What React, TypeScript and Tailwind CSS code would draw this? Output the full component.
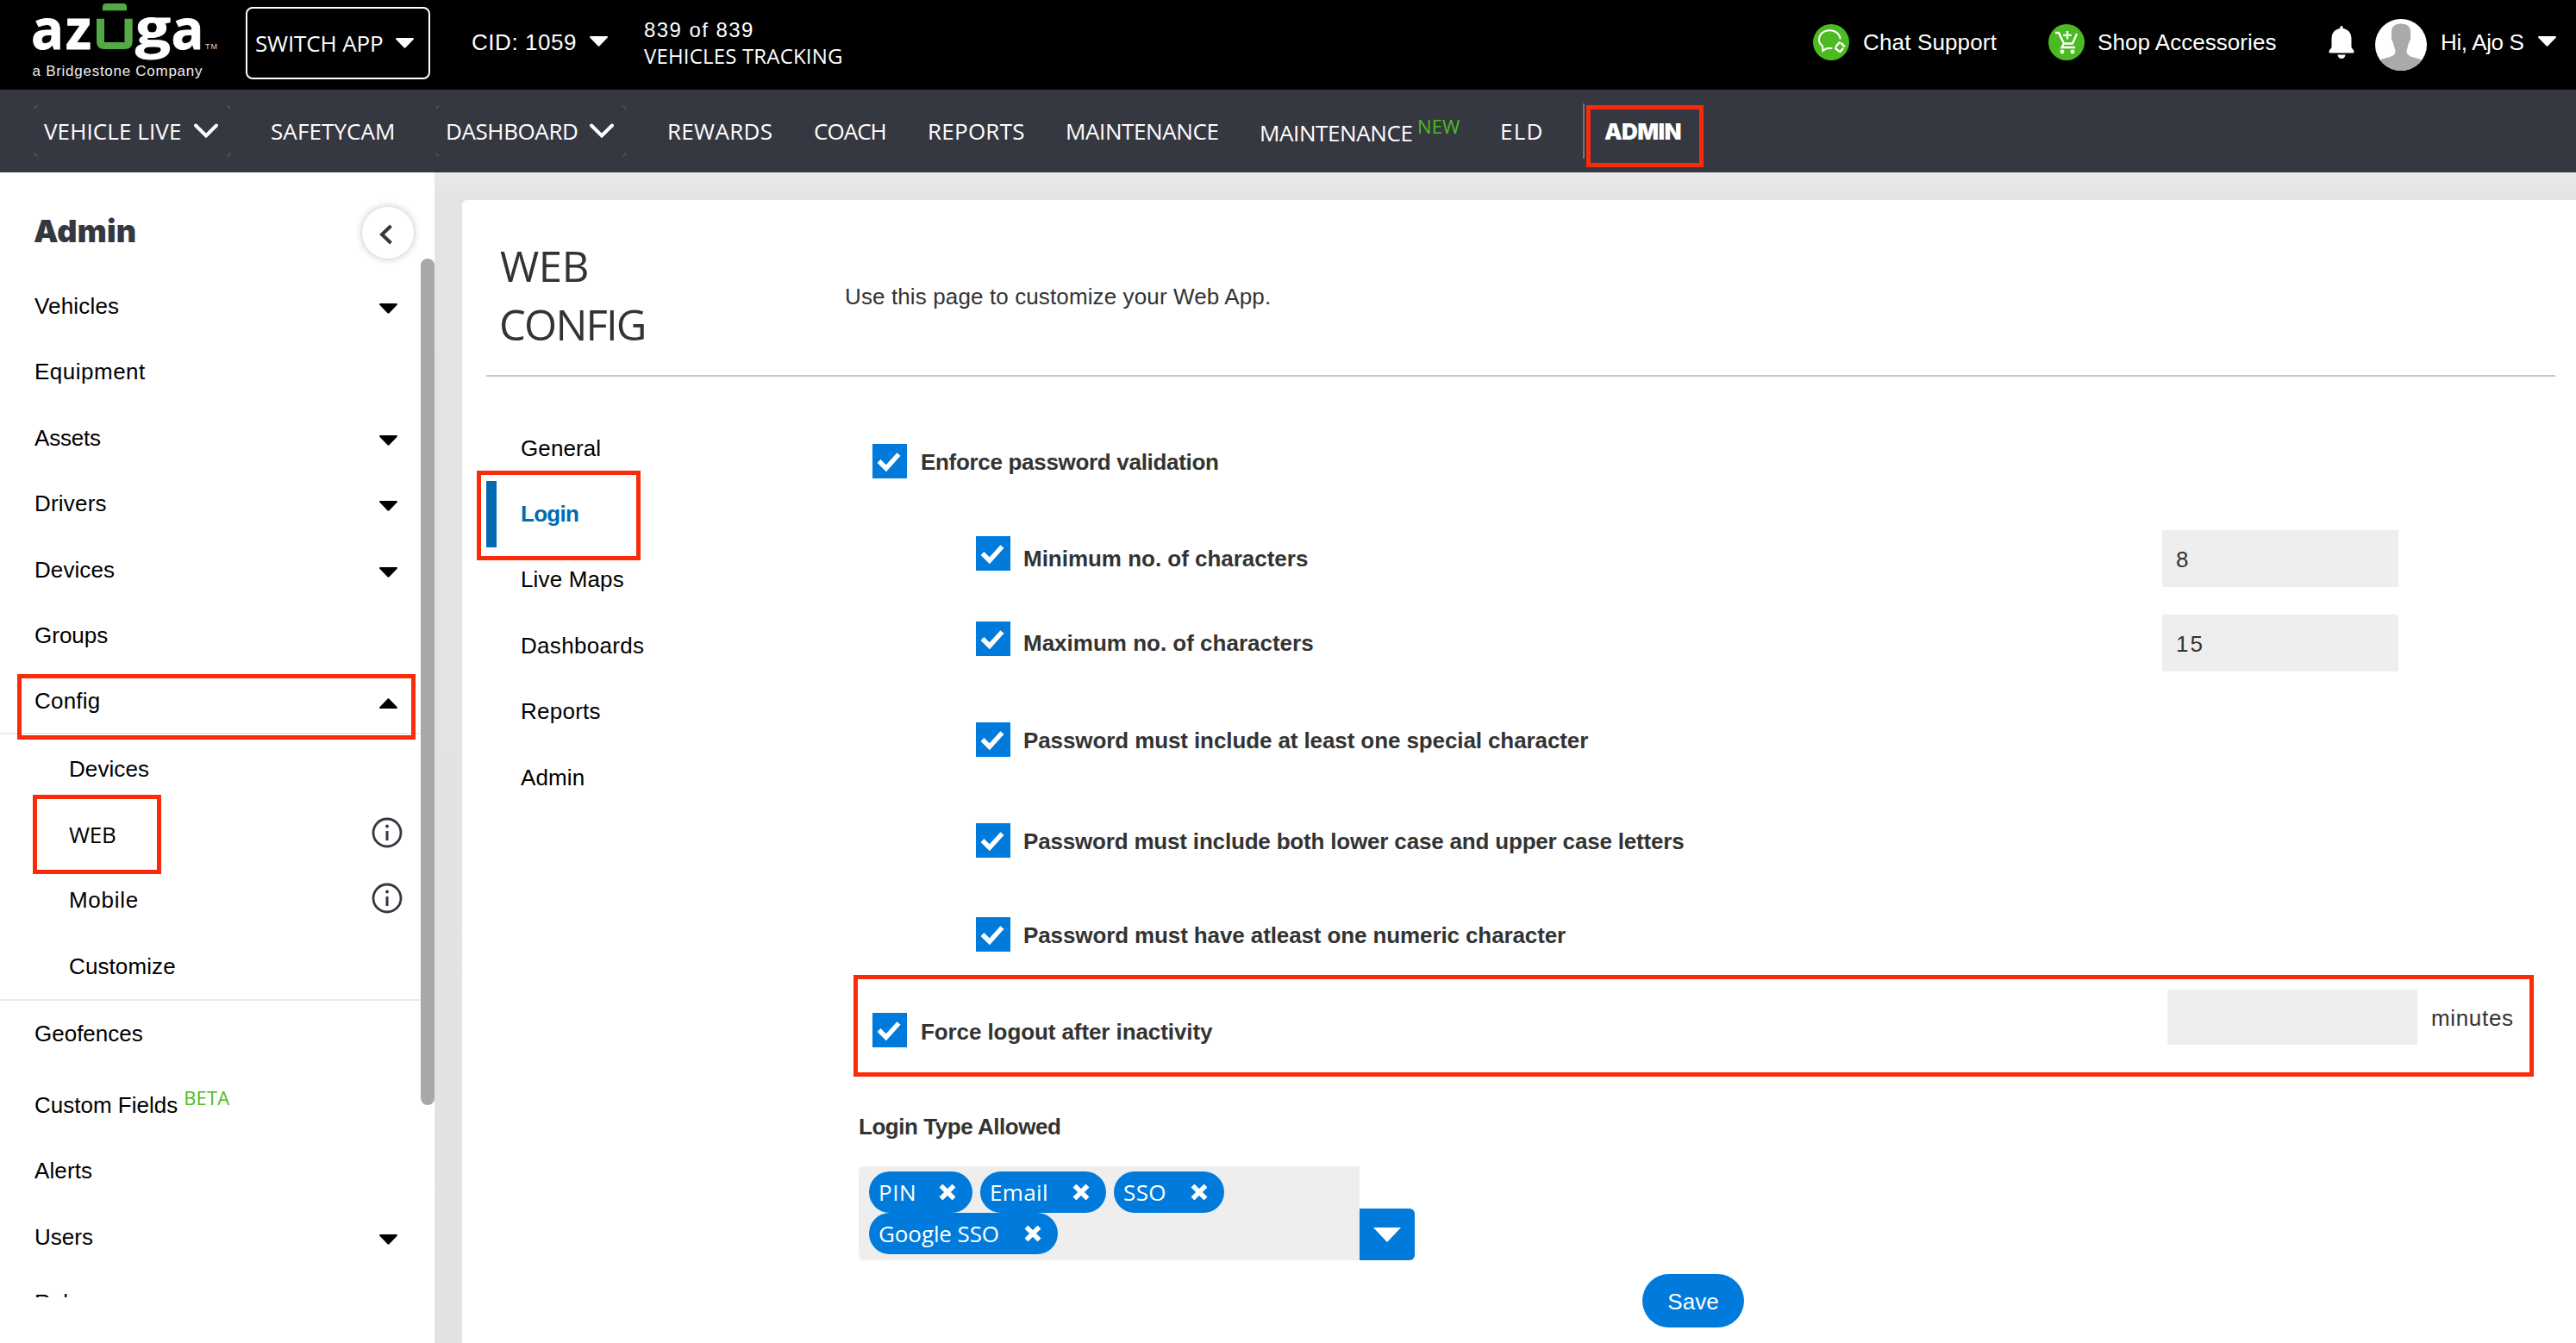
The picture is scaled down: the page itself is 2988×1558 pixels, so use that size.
import React from "react";

const sans = "font-['Liberation_Sans',Arial,sans-serif]";
const caps = "font-['Open_Sans',sans-serif]";

function Caret({ up = false, className = "" }: { up?: boolean; className?: string }) {
  return (
    <svg viewBox="0 0 21 12" fill="currentColor" className={`h-3 w-[21px] shrink-0 ${up ? "rotate-180" : ""} ${className}`}>
      <path d="M1.2 0h18.6c1.1 0 1.5 1.1.8 1.8l-9.1 9.4c-.6.6-1.4.6-2 0L.4 1.8C-.3 1.1.1 0 1.2 0z" />
    </svg>
  );
}

function Chevron() {
  return (
    <svg viewBox="0 0 28 18" fill="none" stroke="currentColor" strokeWidth="4" className="h-[18px] w-7 shrink-0">
      <path d="M2 2.5l12 12 12-12" strokeLinecap="round" />
    </svg>
  );
}

function Logo() {
  return (
    <svg viewBox="0 0 220 92" className="ml-9 h-[92px] w-[220px] shrink-0 self-start overflow-visible">
      <g fill="#fff" stroke="#fff" strokeWidth="0.8" fontFamily="'Open Sans', sans-serif" fontWeight="700" fontSize="65">
        <text x="0" y="56.5" textLength="38" lengthAdjust="spacingAndGlyphs">a</text>
        <text x="40" y="56.5" textLength="30" lengthAdjust="spacingAndGlyphs">z</text>
        <text x="121" y="53.5" fontSize="60" textLength="41" lengthAdjust="spacingAndGlyphs">g</text>
        <text x="162.500" y="56.5" textLength="38" lengthAdjust="spacingAndGlyphs">a</text>
      </g>
      <path d="M83 12.300V8q0-4 4-4h20q4 0 4 4v4.300z" fill="#54a946" />
      <path d="M76 21.700h9V49h23.500V21.700h9.200V48q0 9-9 9H85q-9 0-9-9z" fill="#54a946" />
      <text x="202" y="57" fill="#ddd" fontFamily="'Liberation Sans', sans-serif" fontSize="9" textLength="14">TM</text>
      <text x="1.500" y="88" fill="#eee" fontFamily="'Liberation Sans', sans-serif" fontSize="17" textLength="197">a Bridgestone Company</text>
    </svg>
  );
}

function ChatIcon() {
  return (
    <svg viewBox="0 0 42 42" className="size-[42px] shrink-0">
      <circle cx="21" cy="21" r="21" fill="#4cbb22" />
      <g fill="none" stroke="#fff" strokeWidth="2" strokeLinecap="round">
        <path d="M31.500 16.500a12.300 10.500 0 1 0-20.500 9l.5 5.500 4-2.800 6-.2" />
        <path d="M27 25.500l3.500-4M33 22.500l3 3M34.500 28.500l-3 3.500M29.500 31l-3.500-3" strokeWidth="2.600" />
      </g>
    </svg>
  );
}

function CartIcon() {
  return (
    <svg viewBox="0 0 42 42" className="size-[42px] shrink-0">
      <circle cx="21" cy="21" r="21" fill="#4cbb22" />
      <g fill="none" stroke="#fff" strokeWidth="2.300">
        <path d="M8 10h4l6 12.500h10l5-11.500M18 22.500l-2.500 4.500h15.500M22 8v9.500M17.200 12.800h9.600" />
      </g>
      <circle cx="16" cy="32" r="2.400" fill="#fff" />
      <circle cx="28" cy="32" r="2.400" fill="#fff" />
    </svg>
  );
}

function BellIcon() {
  return (
    <svg viewBox="0 0 30 38" fill="#fff" className="h-[38px] w-[30px] shrink-0">
      <path d="M15 0c1.300 0 1.800 1 1.800 3C23 4 26.500 8.500 26.500 15v10l2.500 3.200q1.500 3.300-1 3.300H2q-2.500 0-1-3.300L3.500 25V15C3.500 8.500 7 4 13.200 3c0-2 .5-3 1.800-3z" />
      <path d="M10.500 33.500h9c-.3 3-2.300 4.500-4.500 4.500s-4.200-1.500-4.500-4.500z" />
    </svg>
  );
}

function Avatar() {
  return (
    <svg viewBox="0 0 60 60" className="size-[60px] shrink-0">
      <clipPath id="avatar-clip"><circle cx="30" cy="30" r="30" /></clipPath>
      <g clipPath="url(#avatar-clip)">
        <rect width="60" height="60" fill="#fff" />
        <path d="M30 5.500c8 0 11.500 4 11 12-.1 2 .5 3 0 6s-2 3-2.500 6c-.6 4-2 5-1.800 9 .3 6 12 6 18.300 9.500V62H5V48c6.300-3.500 18-3.500 18.300-9.500.2-4-1.200-5-1.800-9-.5-3-2-3-2.500-6s.1-4 0-6c-.5-8 3-12 11-12z" fill="#a9abab" />
      </g>
    </svg>
  );
}

function CornerMarks({ className }: { className: string }) {
  return (
    <svg viewBox="0 0 228 60" fill="none" stroke="#5d606a" className={`absolute h-[60px] ${className}`} preserveAspectRatio="none">
      <path d="M1 5q0-4 4-4M223 1q4 0 4 4M227 55q0 4-4 4M5 59q-4 0-4-4" />
    </svg>
  );
}

function Header() {
  return (
    <header className={`flex h-[104px] items-center bg-black pb-1.5 text-[26px] whitespace-nowrap text-white ${sans}`}>
      <Logo />
      <button className={`mt-[2px] ml-[29px] flex h-[84px] w-[214px] items-center rounded-lg border-2 border-white pl-[9px] tracking-[-0.14px] ${caps}`}>
        <span className="w-[163px] text-left">SWITCH APP</span>
        <Caret className="mb-0" />
      </button>
      <div className="ml-[48px] flex w-[158px] items-center justify-between">
        <span className="tracking-[0.55px]">CID: 1059</span>
        <Caret className="mb-[3px]" />
      </div>
      <div className="ml-[42px] text-2xl leading-[31px]">
        <div className="tracking-[1.430px]">839 of 839</div>
        <div className={`-mt-px tracking-[0.17px] ${caps}`}>VEHICLES TRACKING</div>
      </div>
      <div className="ml-auto flex items-center">
        <ChatIcon />
        <span className="ml-[16px] w-[215px] tracking-[0.15px]">Chat Support</span>
        <CartIcon />
        <span className="ml-[15px] w-[268px] tracking-[0.05px]">Shop Accessories</span>
        <BellIcon />
        <div className="mt-[5px] ml-6"><Avatar /></div>
        <span className="ml-4 w-[113px] tracking-[-0.35px]">Hi, Ajo S</span>
        <Caret className="mr-[23px] mb-[3px]" />
      </div>
    </header>
  );
}

function Nav() {
  return (
    <nav className={`relative flex h-24 items-center bg-[#363841] text-[26px] whitespace-nowrap text-white ${caps}`}>
      <CornerMarks className="left-[39px] w-[229px]" />
      <CornerMarks className="left-[505px] w-[222px]" />
      <span className="ml-[51px] w-[174px] tracking-[0.1px]">VEHICLE LIVE</span>
      <Chevron />
      <span className="ml-[61px] w-[202px] tracking-[0.1px]">SAFETYCAM</span>
      <span className="ml-[1px] w-[167px] tracking-[-0.4px]">DASHBOARD</span>
      <Chevron />
      <span className="ml-[62px] w-[170px] tracking-[0.3px]">REWARDS</span>
      <span className="w-[132px] tracking-[-0.95px]">COACH</span>
      <span className="w-[160px] tracking-[0.25px]">REPORTS</span>
      <span className="w-[225px] tracking-[-0.4px]">MAINTENANCE</span>
      <span className="mt-[5px] w-[183px] tracking-[-0.4px]">MAINTENANCE</span>
      <span className="-mt-[12px] w-[96px] text-[22px] tracking-[0.11px] text-[#4cbb22]">NEW</span>
      <span className="w-[96px] tracking-[1.2px]">ELD</span>
      <span className="h-16 w-[2px] bg-[#74767e]" />
      <span className="mt-3 ml-[2px] flex h-[72px] w-[136px] border-[5px] border-[#fa2b0b] pt-[4px] pl-4 font-['Inter',sans-serif] leading-[44px] font-black tracking-[-0.6px]">ADMIN</span>
    </nav>
  );
}

type Row = { label: string; tracking?: string; caret?: boolean };
const topRows: Row[] = [
  { label: "Vehicles", tracking: "tracking-[0.17px]", caret: true },
  { label: "Equipment", tracking: "tracking-[0.5px]" },
  { label: "Assets", tracking: "tracking-[-0.21px]", caret: true },
  { label: "Drivers", tracking: "tracking-[0.2px]", caret: true },
  { label: "Devices", tracking: "tracking-[0.09px]", caret: true },
  { label: "Groups" },
];

function SideRow({ label, tracking = "", caret = false }: Row) {
  return (
    <div className="flex h-[76.5px] items-center justify-between pr-[27px] pl-10">
      <span className={tracking}>{label}</span>
      {caret && <Caret className="mt-[5px]" />}
    </div>
  );
}

function InfoIcon() {
  return (
    <svg viewBox="0 0 36 36" fill="none" stroke="#363841" className="mr-[21px] mb-[5px] size-9">
      <circle cx="18" cy="18" r="16" strokeWidth="2.800" />
      <path d="M18 16v11" strokeWidth="3" />
      <circle cx="18" cy="10.500" r="1.900" fill="#363841" stroke="none" />
    </svg>
  );
}

function Sidebar() {
  return (
    <aside className={`relative h-full w-[504px] shrink-0 bg-white text-[26px] whitespace-nowrap text-black ${sans}`}>
      <div className="flex h-[117px] items-center pl-[39px] text-[#363841]">
        <h2 className="mt-[19px] w-[381px] font-['Inter',sans-serif] text-[36px] font-black tracking-[0.2px]">Admin</h2>
        <button className="mt-[23px] flex size-[60px] items-center justify-center rounded-full bg-white shadow-[0_0_8px_rgba(0,0,0,0.25)]">
          <svg viewBox="0 0 16 24" fill="none" stroke="currentColor" strokeWidth="4" className="mt-1 mr-1 h-6 w-4"><path d="M13.500 2L3 12l10.500 10" /></svg>
        </button>
      </div>
      <div className="h-[1188px] overflow-hidden">
        <div className="w-[488px]">
          {topRows.map((r) => <SideRow key={r.label} {...r} />)}
          <div className="relative flex h-[76.4px] items-center justify-between border-b-2 border-[#ebebeb] pr-[27px] pl-10">
            <span className="tracking-[0.2px]">Config</span>
            <Caret up className="mt-[5px]" />
            <span className="absolute top-[6px] left-5 h-[76px] w-[462px] border-[5px] border-[#fa2b0b]" />
          </div>
          <div className="border-b-2 border-[#ebebeb] pl-20">
            <div className="flex h-[78px] items-center pt-[2px]"><span className="tracking-[0.09px]">Devices</span></div>
            <div className="relative flex h-[76.4px] items-center justify-between">
              <span className={`tracking-[-0.2px] ${caps}`}>WEB</span>
              <InfoIcon />
              <span className="absolute -top-[8px] -left-[42px] h-[92px] w-[149px] border-[5px] border-[#fa2b0b]" />
            </div>
            <div className="flex h-[76.4px] items-center justify-between"><span className="tracking-[0.7px]">Mobile</span><InfoIcon /></div>
            <div className="flex h-[76px] items-center"><span className="tracking-[0.1px]">Customize</span></div>
          </div>
          <SideRow label="Geofences" />
          <div className="flex h-[83px] items-center pl-10">
            <span className="mt-[7px]">Custom Fields</span>
            <span className="-mt-[12px] ml-[7px] font-['Open_Sans',sans-serif] text-[22px] tracking-[0.15px] text-[#4cbb22]">BETA</span>
          </div>
          <SideRow label="Alerts" tracking="tracking-[0.11px]" />
          <SideRow label="Users" caret />
          <SideRow label="Rules" />
        </div>
      </div>
      <div className="absolute top-[100px] right-0 h-[982px] w-4 rounded-full bg-[#a8a8a8]" />
    </aside>
  );
}

function Check({ className = "" }: { className?: string }) {
  return (
    <span className={`flex size-10 shrink-0 items-center justify-center bg-[#007bdb] ${className}`}>
      <svg viewBox="0 0 40 40" fill="none" stroke="#fff" strokeWidth="5.500" className="size-10"><path d="M7.500 20l8.300 8.300L30.500 12" /></svg>
    </span>
  );
}

function Chip({ label, className }: { label: string; className: string }) {
  return (
    <span className={`flex h-12 items-center justify-between rounded-full bg-[#007bdb] pr-[19px] pl-[11px] text-white ${className}`}>
      {label}
      <svg viewBox="0 0 20 18" fill="none" stroke="currentColor" strokeWidth="5.500" className="h-[18px] w-5"><path d="M2.500 1.500l15 15M17.500 1.500l-15 15" /></svg>
    </span>
  );
}

const tabs = [
  { label: "General", tracking: "tracking-[0.1px]" },
  { label: "Login", tracking: "tracking-[-0.72px]", active: true },
  { label: "Live Maps", tracking: "tracking-[0.15px]" },
  { label: "Dashboards", tracking: "tracking-[0.3px]" },
  { label: "Reports", tracking: "tracking-[0.25px]" },
  { label: "Admin", tracking: "tracking-[0.1px]" },
];

function Main() {
  return (
    <main className="flex-1 bg-linear-to-b from-[#e8e9e8] via-[#e4e4e4] via-2% to-[#e2e2e2] pt-8 pl-8">
      <section className={`h-full rounded-tl-md bg-white pr-6 pl-7 text-[26px] whitespace-nowrap text-[#333] ${sans}`}>
        <div className="flex h-[205px] items-start border-b-2 border-[#c8c8c8] pt-[42px]">
          <h1 className={`ml-[16px] w-[400px] text-[49px] leading-[68px] ${caps}`}>
            <span className="block tracking-[-0.4px]">WEB</span>
            <span className="-ml-[1px] block tracking-[-1.8px]">CONFIG</span>
          </h1>
          <p className="mt-[2px] leading-[136px] tracking-[0.12px]">Use this page to customize your Web App.</p>
        </div>
        <div className="flex">
          <div className="w-[432px] pt-[45px] text-black">
            {tabs.map((t) => (
              <div key={t.label} className="relative flex h-[76.4px] items-center">
                <span className={`h-full w-3 ${t.active ? "bg-[#006bb3]" : ""}`} />
                <span className={`ml-7 ${t.tracking} ${t.active ? "font-bold text-[#006bb3]" : ""}`}>{t.label}</span>
                {t.active && <span className="absolute -top-[12px] -left-[11px] h-[104px] w-[190px] border-[5px] border-[#fa2b0b]" />}
              </div>
            ))}
          </div>
          <div className="flex-1 font-bold">
            <div className="mt-[78px] ml-4 flex h-10 items-center gap-4">
              <Check />
              <span className="mt-[2px] tracking-[-0.31px]">Enforce password validation</span>
            </div>
            <div className="mt-[60px] ml-[136px] flex h-[66px] items-center">
              <Check className="mb-3" />
              <span className="ml-[15px] w-[1321px] tracking-[-0.02px]">Minimum no. of characters</span>
              <span className="h-[66px] w-[274px] bg-[#eee] pl-4 leading-[68px] font-normal">8</span>
            </div>
            <div className="mt-8 ml-[136px] flex h-[66px] items-center">
              <Check className="mb-[10px]" />
              <span className="ml-[15px] w-[1321px]">Maximum no. of characters</span>
              <span className="h-[66px] w-[274px] bg-[#eee] pl-4 leading-[68px] font-normal tracking-[2px]">15</span>
            </div>
            <div className="mt-[59px] ml-[136px] flex h-10 items-center gap-[15px]">
              <Check />
              <span className="mt-[2px] tracking-[-0.1px]">Password must include at least one special character</span>
            </div>
            <div className="mt-[77px] ml-[136px] flex h-10 items-center gap-[15px]">
              <Check />
              <span className="mt-[2px] tracking-[-0.18px]">Password must include both lower case and upper case letters</span>
            </div>
            <div className="mt-[69px] ml-[136px] flex h-10 items-center gap-[15px]">
              <Check />
              <span className="mt-[2px] tracking-[-0.11px]">Password must have atleast one numeric character</span>
            </div>
            <div className="mt-[27px] -ml-[6px] flex h-[118px] w-[1949px] items-start border-[5px] border-[#fa2b0b] pl-[17px]">
              <Check className="mt-[39px]" />
              <span className="mt-[40px] ml-4 w-[1446px] leading-[43px] tracking-[-0.09px]">Force logout after inactivity</span>
              <span className="mt-[12px] h-16 w-[290px] bg-[#eee]" />
              <span className="mt-[12px] ml-4 leading-[66px] font-normal tracking-[0.66px]">minutes</span>
            </div>
            <div className="mt-[43px] leading-[30px] tracking-[-0.46px]">Login Type Allowed</div>
            <div className="mt-[31px] flex h-[109px] items-end font-['Open_Sans',sans-serif] font-normal">
              <div className="flex h-full w-[581px] flex-wrap content-start gap-x-[9px] rounded-l-md bg-[#eee] pt-[6px] pr-28 pl-3">
                <Chip label="PIN" className="w-[120px] tracking-[0.55px]" />
                <Chip label="Email" className="w-[146px] tracking-[0.37px]" />
                <Chip label="SSO" className="w-[128px] tracking-[0.4px]" />
                <Chip label="Google SSO" className="w-[219px] tracking-[-0.1px]" />
              </div>
              <button className="flex h-[60px] w-16 items-center justify-center rounded-r-md bg-[#007bdb] text-white">
                <svg viewBox="0 0 32 17" fill="currentColor" className="h-[17px] w-8"><path d="M0 0h32L16 17z" /></svg>
              </button>
            </div>
            <button className="mt-4 ml-[909px] flex h-[62px] w-[118px] items-center justify-center rounded-full bg-[#007bdb] pt-[2px] font-normal text-white">Save</button>
          </div>
        </div>
      </section>
    </main>
  );
}

export default function App() {
  return (
    <div className="flex h-[1558px] w-[2988px] flex-col overflow-hidden bg-white">
      <Header />
      <Nav />
      <div className="flex min-h-0 flex-1">
        <Sidebar />
        <Main />
      </div>
    </div>
  );
}
